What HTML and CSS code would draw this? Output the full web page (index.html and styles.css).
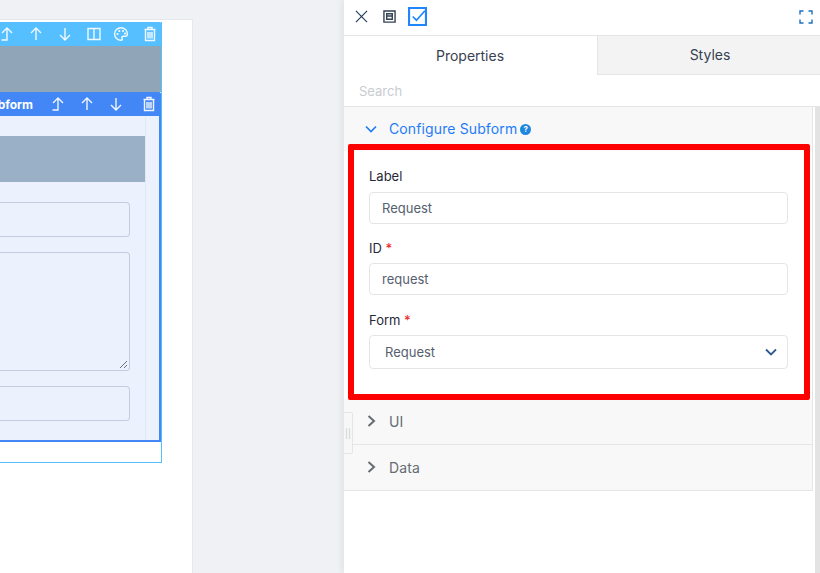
FILE: index.html
```html
<!DOCTYPE html>
<html lang="en">
<head>
<meta charset="utf-8">
<title>Subform builder</title>
<link rel="stylesheet" href="styles.css">
</head>
<body>
<div class="app">
  <main class="canvas">
    <div class="sheet">
      <div class="outer">
        <div class="bar bar-outer">
          <svg class="ic" viewBox="0 0 16 16"><path d="M2.500 14H8V2M3 7L8 2L13 7"/></svg>
          <svg class="ic" viewBox="0 0 16 16"><path d="M8 14V2M3 7L8 2L13 7"/></svg>
          <svg class="ic" viewBox="0 0 16 16"><path d="M8 2V14M3 9L8 14L13 9"/></svg>
          <svg class="ic ic-tight" viewBox="0 0 16 16"><path d="M2 2.500H14V13.500H2ZM8 2.500V13.500"/></svg>
          <svg class="ic" viewBox="0 0 16 16"><path d="M8 1.800C4.500 1.800 1.600 4.500 1.600 8S4.500 14.300 8 14.300C9.500 14.300 9.500 13 9 12.200C8.500 11 9.300 10.200 10.500 10.200H12.500C13.800 10.200 14.400 9 14.400 8C14.400 4.500 11.500 1.800 8 1.800Z"/><circle class="dot" cx="4.500" cy="8" r="1.100"/><circle class="dot" cx="6.300" cy="5" r="1.100"/><circle class="dot" cx="10" cy="5" r="1.100"/><circle class="dot" cx="12" cy="7.500" r="1.100"/></svg>
          <svg class="ic" viewBox="0 0 16 16"><path d="M3.500 4V14.500H12.500V4M2.500 3.500H13.500M6 3.500V1.500H10V3.500M6 6V12.500M8 6V12.500M10 6V12.500"/></svg>
        </div>
        <div class="banner"></div>
        <div class="inner">
          <div class="bar bar-inner">
            <span class="bar-title">Subform</span>
            <svg class="ic" viewBox="0 0 16 16"><path d="M2.500 14H8V2M3 7L8 2L13 7"/></svg>
            <svg class="ic" viewBox="0 0 16 16"><path d="M8 14V2M3 7L8 2L13 7"/></svg>
            <svg class="ic" viewBox="0 0 16 16"><path d="M8 2V14M3 9L8 14L13 9"/></svg>
            <svg class="ic ic-trash" viewBox="0 0 16 16"><path d="M3.500 4V14.500H12.500V4M2.500 3.500H13.500M6 3.500V1.500H10V3.500M6 6V12.500M8 6V12.500M10 6V12.500"/></svg>
          </div>
          <div class="inner-body">
            <div class="form-col">
              <div class="form-head"></div>
              <div class="ghost ghost-input"></div>
              <div class="ghost ghost-area">
                <svg class="grip" viewBox="0 0 9 9"><path d="M1 8L8 1M5 8L8 5"/></svg>
              </div>
              <div class="ghost ghost-input"></div>
            </div>
          </div>
        </div>
        <div class="outer-foot"></div>
      </div>
    </div>
  </main>

  <aside class="panel">
    <div class="topbar">
      <svg class="tool tool-x" viewBox="0 0 14 14"><path d="M1 1L13 13M13 1L1 13"/></svg>
      <svg class="tool tool-win" viewBox="0 0 14 14"><path d="M1 1H13V13H1ZM4 4H10V10H4ZM4 6.500H10"/></svg>
      <svg class="tool tool-check" viewBox="0 0 18 18"><path class="check-box" d="M1 1H17V17H1Z"/><path d="M4.500 9L8 12.500L16 3.500"/></svg>
      <svg class="tool tool-full" viewBox="0 0 14 14"><path d="M1 4.500V1H4.500M9.500 1H13V4.500M13 9.500V13H9.500M4.500 13H1V9.500"/></svg>
    </div>
    <div class="tabs">
      <div class="tab tab-on">Properties</div>
      <div class="tab tab-off">Styles</div>
    </div>
    <div class="search">Search</div>
    <div class="scroll">
      <div class="accordion">
        <div class="acc-head acc-open">
          <svg class="chev" viewBox="0 0 12 12"><path d="M1 3.500L6 8.500L11 3.500"/></svg>
          <span class="acc-title">Configure Subform</span>
          <span class="help">?</span>
        </div>
        <div class="acc-body">
          <div class="field">
            <label class="lbl">Label</label>
            <div class="input">Request</div>
          </div>
          <div class="field field-id">
            <label class="lbl">ID <b class="req">*</b></label>
            <div class="input">request</div>
          </div>
          <div class="field field-form">
            <label class="lbl">Form <b class="req">*</b></label>
            <div class="input select">
              <span>Request</span>
              <svg class="sel-chev" viewBox="0 0 12 8"><path d="M1 1.500L6 6.500L11 1.500"/></svg>
            </div>
          </div>
        </div>
        <div class="acc-head acc-closed">
          <svg class="chev chev-side" viewBox="0 0 12 12"><path d="M3.500 1L9 6L3.500 11"/></svg>
          <span class="acc-title">UI</span>
        </div>
        <div class="acc-head acc-closed">
          <svg class="chev chev-side" viewBox="0 0 12 12"><path d="M3.500 1L9 6L3.500 11"/></svg>
          <span class="acc-title">Data</span>
        </div>
      </div>
      <div class="scrollbar"></div>
    </div>
    <div class="handle">||</div>
    <div class="highlight"></div>
  </aside>
</div>
</body>
</html>
```
FILE: styles.css
```css
* { box-sizing: border-box; }
html, body { margin: 0; height: 100%; overflow: hidden; }
body { font-family: Inter, "Liberation Sans", sans-serif; color: #374151; background: #f0f1f5; }
.app { display: flex; width: 820px; height: 573px; }

/* canvas */
.canvas { width: 344px; flex: none; padding-top: 19px; overflow: hidden; background: #f0f1f5; }
.sheet { width: 193px; height: 554px; background: #fff; border-top: 1px solid #e5e7eb; border-right: 1px solid #e5e7eb; padding-top: 2px; overflow: hidden; }
.outer { width: 162px; height: 441px; border: 1px solid #55bfff; border-top: 0; border-left: 0; display: flex; flex-direction: column; }
.bar { display: flex; align-items: center; justify-content: flex-end; color: #fff; height: 24px; flex: none; }
.bar-outer { background: #55bfff; width: 162px; gap: 13px; padding-right: 4px; border-top-right-radius: 3px; }
.banner { height: 46px; flex: none; background: #90a6b8; }
.inner { height: 350px; flex: none; width: 161px; background: #4287f5; padding: 0 2px 2px 0; display: flex; flex-direction: column; border-top-right-radius: 3px; }
.bar-inner { background: #4287f5; gap: 13px; padding-right: 4px; font-weight: 700; font-size: 12px; margin-right: -2px; border-top-right-radius: 3px; }
.bar-title { flex: none; margin-right: 4px; white-space: nowrap; }
.inner-body { flex: 1; background: #ebf1fd; display: flex; justify-content: flex-start; }
.form-col { width: 146px; height: 100%; border-right: 1px solid #e2e8f2; padding-top: 20px; display: flex; flex-direction: column; }
.form-head { height: 46px; width: 145px; background: #9ab0c6; flex: none; margin-bottom: 20px; }
.ghost { width: 130px; flex: none; border: 1px solid #c2cde0; border-left: 0; border-radius: 0 4px 4px 0; position: relative; }
.ghost-input { height: 35px; }
.ghost-area { height: 119px; margin: 15px 0; }
.grip { position: absolute; right: 1px; bottom: 1px; width: 9px; height: 9px; fill: none; stroke: #6b7280; stroke-width: 1; }
.outer-foot { flex: 1; }
.ic { width: 16px; height: 16px; fill: none; stroke: #fff; stroke-width: 1.400; opacity: .92; flex: none; }
.ic-tight { margin-right: -2px; }
.ic-trash { margin-left: 4px; }
.dot { fill: #fff; stroke: none; }

/* panel */
.panel { width: 476px; flex: none; background: #fff; position: relative; display: flex; flex-direction: column; box-shadow: -3px 0 6px rgba(0, 0, 0, .05); }
.topbar { height: 36px; flex: none; display: flex; align-items: center; padding: 0 7px 2px 11px; border-bottom: 1px solid #e5e5e5; }
.tool { fill: none; flex: none; }
.tool-x { width: 13px; height: 13px; stroke: #1f3a5f; stroke-width: 1.200; }
.tool-win { width: 13px; height: 13px; stroke: #334155; stroke-width: 1.500; margin-left: 15px; }
.tool-check { width: 19px; height: 19px; stroke: #1f86ff; stroke-width: 1.600; margin-left: 12px; }
.check-box { stroke-width: 2; }
.tool-full { width: 14px; height: 14px; stroke: #1c6fc4; stroke-width: 1.400; margin-left: auto; }
.tabs { display: flex; height: 39px; flex: none; font-size: 14px; }
.tab { display: flex; align-items: center; justify-content: center; flex: 1; background: #f3f3f3; border-bottom: 1px solid #e5e5e5; color: #374151; }
.tab-on { flex: none; width: 254px; background: #fff; border-bottom: 0; border-right: 1px solid #e5e5e5; padding-right: 1px; }
.tab-off { padding: 0 0 2px 2px; }
.search { height: 32px; flex: none; padding: 0 15px; display: flex; align-items: center; font-size: 13px; color: #c8ccd1; border-bottom: 1px solid #e5e5e5; }
.scroll { flex: 1; display: flex; min-height: 0; }
.accordion { width: 469px; flex: none; border-right: 1px solid #e5e5e5; align-self: flex-start; background: #f8f8f8; }
.scrollbar { width: 5px; margin-left: 2px; background: #e3e3e3; }
.acc-head { display: flex; align-items: center; font-size: 14px; }
.acc-title { letter-spacing: .12px; }
.chev { width: 12px; height: 12px; fill: none; stroke: currentColor; stroke-width: 1.700; margin: 0 12px 0 21px; flex: none; }
.chev-side { stroke-width: 2; margin-top: -2px; }
.acc-open { height: 44px; color: #1f7cf7; background: #f8f8f8; padding-bottom: 1px; }
.acc-closed { height: 46px; color: #666c74; border-bottom: 1px solid #e5e5e5; }
.help { width: 11px; height: 11px; border-radius: 50%; background: #1f86e0; color: #fff; font-size: 8px; font-weight: 700; display: flex; align-items: center; justify-content: center; margin-left: 3px; margin-top: 1px; }
.acc-body { height: 248px; background: #fff; padding: 17px 24px 0 25px; display: flex; flex-direction: column; gap: 16px; }
.field { display: flex; flex-direction: column; }
.field-form { margin-top: 1px; }
.lbl { font-size: 13px; line-height: 16px; font-weight: 400; color: #1f2937; margin-bottom: 7px; }
.field:first-child .lbl { margin-bottom: 8px; }
.req { color: #ef2b2b; font-weight: 500; }
.input { height: 32px; border: 1px solid #e5e5e5; border-radius: 4px; background: #fff; padding: 0 12px; display: flex; align-items: center; font-size: 13px; color: #55606f; }
.select { height: 34px; padding: 0 10px 0 15px; justify-content: space-between; }
.sel-chev { width: 12px; height: 8px; fill: none; stroke: #2f5a8f; stroke-width: 1.800; }
.handle { position: absolute; left: 0; top: 412px; width: 9px; height: 42px; background: #f7f7f7; border: 1px solid #e5e5e5; border-left: 0; border-radius: 0 2px 2px 0; font-size: 9px; color: #c4c8cc; display: flex; align-items: center; justify-content: center; }
.highlight { position: absolute; left: 4px; top: 144px; width: 462px; height: 256px; border: 6px solid #f00; border-radius: 2px; pointer-events: none; }
```
